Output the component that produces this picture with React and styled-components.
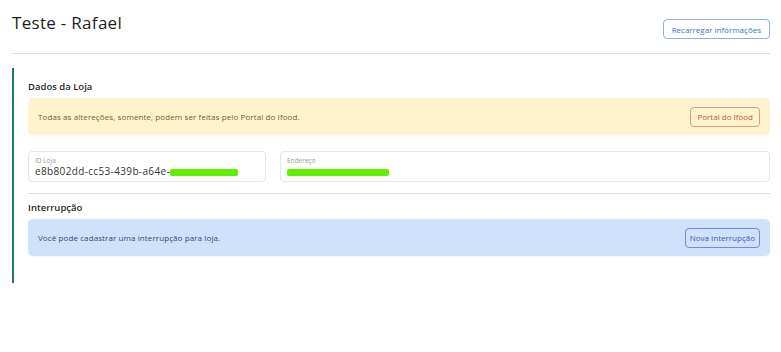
import React from "react";
import styled, { createGlobalStyle } from "styled-components";

const GlobalStyle = createGlobalStyle`
  body {
    margin: 0;
    background: #ffffff;
    font-family: "Open Sans", "Liberation Sans", sans-serif;
    color: #222;
  }
`;

const Page = styled.div`
  padding: 0 11px 0 12px;
`;

const Header = styled.div`
  display: flex;
  align-items: flex-start;
  justify-content: space-between;
  padding-top: 11px;
  height: 42px;
  border-bottom: 1px solid #dcdcdc;
`;

const Title = styled.h1`
  margin: 0;
  font-size: 17px;
  font-weight: 500;
  color: #1d1d1d;
  letter-spacing: 0.3px;
`;

const OutlineButton = styled.button`
  font-family: inherit;
  font-size: 8px;
  height: ${(p) => p.$h || 20}px;
  padding: 0 ${(p) => p.$px || 7}px;
  background: transparent;
  border: 1px solid ${(p) => p.$border};
  color: ${(p) => p.$color};
  border-radius: 4px;
  cursor: pointer;
  margin-top: ${(p) => p.$top || 0}px;
`;

const Card = styled.section`
  margin-top: 14px;
  border-left: 2px solid #1f7a5c;
  padding: 12px 0 27px 14px;
`;

const SectionTitle = styled.h2`
  margin: 0 0 5px;
  font-size: 9.5px;
  font-weight: 600;
  color: #2a2a2a;
`;

const Alert = styled.div`
  display: flex;
  align-items: center;
  justify-content: space-between;
  height: 37px;
  padding: 0 10px;
  border-radius: 5px;
  background: ${(p) => p.$bg};
  color: ${(p) => p.$color};
  font-size: 8px;
  letter-spacing: 0.1px;
  box-shadow: 0 1px 2px rgba(0, 0, 0, 0.04);
`;

const Fields = styled.div`
  display: grid;
  grid-template-columns: 238px 1fr;
  gap: 14px;
  margin-top: 16px;
  padding-bottom: 11px;
  border-bottom: 1px solid #dcdcdc;
`;

const Field = styled.div`
  height: 31px;
  border: 1px solid #e6e6e6;
  border-radius: 4px;
  padding: 4px 6px 0;
  box-sizing: border-box;
  overflow: hidden;
`;

const FieldLabel = styled.div`
  font-size: 6.5px;
  color: #9a9a9a;
  line-height: 9px;
`;

const FieldValue = styled.div`
  font-size: 10px;
  letter-spacing: 0.35px;
  color: #333;
  line-height: 13px;
  white-space: nowrap;
`;

const Redact = styled.span`
  display: inline-block;
  vertical-align: middle;
  width: ${(p) => p.$w}px;
  height: 7px;
  background: #5ff000;
  border-radius: 2px;
`;

const Spaced = styled.div`
  margin-top: 7px;
`;

export default function App() {
  return (
    <>
      <GlobalStyle />
      <Page>
        <Header>
          <Title>Teste - Rafael</Title>
          <OutlineButton $border="#8fb0e6" $color="#3b6fcf" $top={8} $px={8}>
            Recarregar informações
          </OutlineButton>
        </Header>

        <Card>
          <SectionTitle>Dados da Loja</SectionTitle>
          <Alert $bg="#fff3cd" $color="#7a5a2a">
            Todas as altereções, somente, podem ser feitas pelo Portal do Ifood.
            <OutlineButton $border="#d99a88" $color="#c0553f" $px={6}>
              Portal do Ifood
            </OutlineButton>
          </Alert>

          <Fields>
            <Field>
              <FieldLabel>ID Loja</FieldLabel>
              <FieldValue>
                e8b802dd-cc53-439b-a64e-<Redact $w={68} />
              </FieldValue>
            </Field>
            <Field>
              <FieldLabel>Endereço</FieldLabel>
              <FieldValue>
                <Redact $w={102} />
              </FieldValue>
            </Field>
          </Fields>

          <Spaced>
            <SectionTitle>Interrupção</SectionTitle>
            <Alert $bg="#cfe2fb" $color="#2c4a7a">
              Você pode cadastrar uma interrupção para loja.
              <OutlineButton $border="#6d8fcf" $color="#3a5fa8" $px={4}>
                Nova Interrupção
              </OutlineButton>
            </Alert>
          </Spaced>
        </Card>
      </Page>
    </>
  );
}
